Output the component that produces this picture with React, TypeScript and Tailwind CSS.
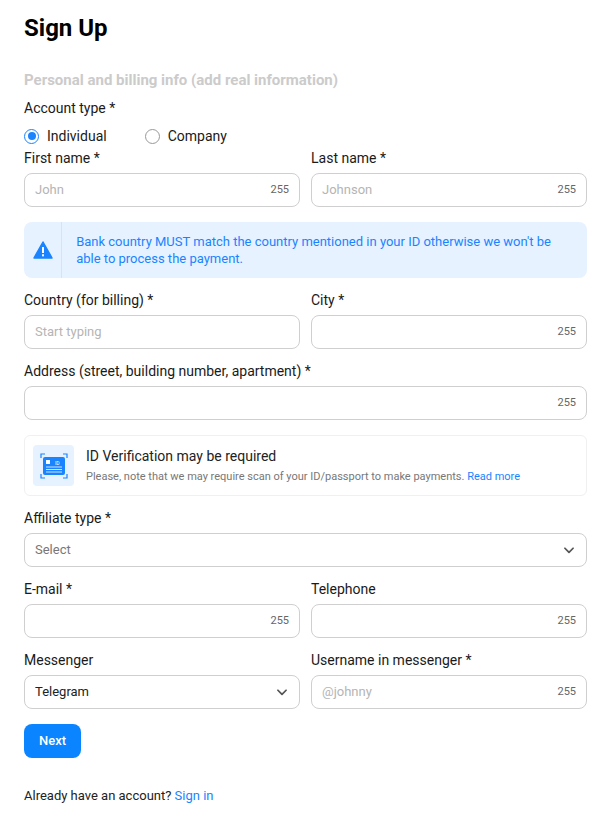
import React from "react";

const Label = ({ children }: { children: React.ReactNode }) => (
  <div className="text-[14px] leading-[20px] text-[#1a1a1a] mb-[5px]">{children}</div>
);

const Input = ({ ph, count = true }: { ph?: string; count?: boolean }) => (
  <div className="h-[34px] border border-[#cfcfcf] rounded-[8px] flex items-center px-[10px] justify-between">
    <span className="text-[13px] text-[#b5b5b5]">{ph}</span>
    {count && <span className="text-[11px] text-[#666]">255</span>}
  </div>
);

const Chevron = () => (
  <svg width="14" height="14" viewBox="0 0 24 24" fill="none" stroke="#555" strokeWidth="3" strokeLinecap="round" strokeLinejoin="round"><path d="M5 9l7 7 7-7" /></svg>
);

export default function App() {
  return (
    <div className="bg-white min-h-[821px] px-[24px] pr-[23px] pt-[12px] text-[#1a1a1a]" style={{ fontFamily: "Roboto, 'Liberation Sans', sans-serif" }}>
      <h1 className="text-[24px] font-bold leading-[32px] text-black">Sign Up</h1>
      <div className="mt-[26px] text-[15px] font-bold text-[#cbcbcb] leading-[20px]">Personal and billing info (add real information)</div>
      <div className="mt-[8px] text-[14px] leading-[20px]">Account type *</div>
      <div className="mt-[9px] flex items-center text-[14px] leading-[18px]">
        <span className="w-[15px] h-[15px] rounded-full border-[1.5px] border-[#1a84ff] flex items-center justify-center">
          <span className="w-[8px] h-[8px] rounded-full bg-[#1a84ff]" />
        </span>
        <span className="ml-[8px]">Individual</span>
        <span className="ml-[38px] w-[15px] h-[15px] rounded-full border border-[#999]" />
        <span className="ml-[8px]">Company</span>
      </div>
      <div className="mt-[3px] grid grid-cols-2 gap-x-[11px]">
        <div><Label>First name *</Label><Input ph="John" /></div>
        <div><Label>Last name *</Label><Input ph="Johnson" /></div>
      </div>
      <div className="mt-[15px] h-[56px] bg-[#e6f2ff] rounded-[8px] flex">
        <div className="w-[49px] flex items-center justify-center border-r border-[#d0e4fa]">
          <svg width="20" height="18" viewBox="0 0 20 18"><path d="M10 1L19 17H1Z" fill="#1a84ff" stroke="#1a84ff" strokeWidth="1.5" strokeLinejoin="round" /><rect x="9" y="6" width="2" height="6" fill="white" /><rect x="9" y="13.3" width="2" height="2" fill="white" /></svg>
        </div>
        <div className="pl-[14px] pr-[12px] flex items-center text-[13px] leading-[17px] text-[#1a84ff]">
          Bank country MUST match the country mentioned in your ID otherwise we won't be able to process the payment.
        </div>
      </div>
      <div className="mt-[12px] grid grid-cols-2 gap-x-[11px]">
        <div><Label>Country (for billing) *</Label><Input ph="Start typing" count={false} /></div>
        <div><Label>City *</Label><Input /></div>
      </div>
      <div className="mt-[12px]"><Label>Address (street, building number, apartment) *</Label><Input /></div>
      <div className="mt-[15px] h-[61px] border border-[#f0f0f0] rounded-[6px] flex items-center px-[8px]">
        <div className="w-[41px] h-[41px] bg-[#e6f2ff] rounded-[4px] flex items-center justify-center">
          <svg width="32" height="32" viewBox="0 0 32 32" fill="none">
            <path d="M3 8V4h4M25 4h4v4M29 24v4h-4M7 28H3v-4" stroke="#1a84ff" strokeWidth="1.2" />
            <rect x="5" y="7" width="22" height="18" rx="2" fill="#1a84ff" />
            <rect x="8" y="10" width="4" height="4" fill="white" />
            <text x="17" y="14.5" fontSize="5" fill="white" fontFamily="Roboto, sans-serif">ID</text>
            <path d="M8 17h16M8 19.5h16M8 22h16" stroke="#cfe3ff" strokeWidth="1" />
          </svg>
        </div>
        <div className="ml-[12px]">
          <div className="text-[14px] leading-[18px] text-[#222]">ID Verification may be required</div>
          <div className="mt-[5px] text-[11px] leading-[14px] text-[#777]">Please, note that we may require scan of your ID/passport to make payments. <span className="text-[#1a84ff]">Read more</span></div>
        </div>
      </div>
      <div className="mt-[12px]"><Label>Affiliate type *</Label>
        <div className="h-[34px] border border-[#cfcfcf] rounded-[8px] flex items-center px-[10px] justify-between">
          <span className="text-[13px] text-[#777]">Select</span><Chevron />
        </div>
      </div>
      <div className="mt-[12px] grid grid-cols-2 gap-x-[11px]">
        <div><Label>E-mail *</Label><Input /></div>
        <div><Label>Telephone</Label><Input /></div>
      </div>
      <div className="mt-[12px] grid grid-cols-2 gap-x-[11px]">
        <div><Label>Messenger</Label>
          <div className="h-[34px] border border-[#cfcfcf] rounded-[8px] flex items-center px-[10px] justify-between">
            <span className="text-[13px] text-[#222]">Telegram</span><Chevron />
          </div>
        </div>
        <div><Label>Username in messenger *</Label><Input ph="@johnny" /></div>
      </div>
      <button className="mt-[15px] h-[34px] w-[57px] bg-[#0a84ff] text-white text-[13px] font-medium rounded-[8px]">Next</button>
      <div className="mt-[28px] text-[13px] text-[#222]">Already have an account? <span className="text-[#1a84ff]">Sign in</span></div>
    </div>
  );
}
